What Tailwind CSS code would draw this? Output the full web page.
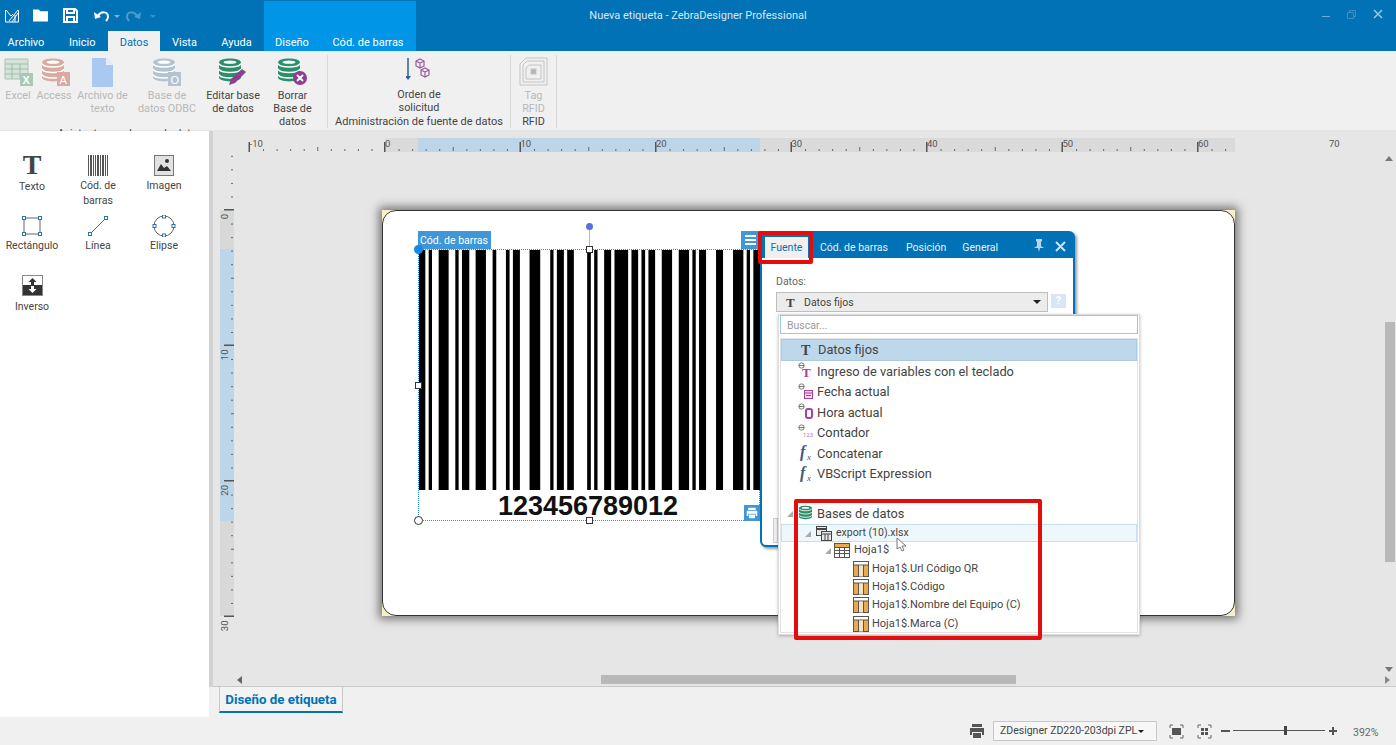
<!DOCTYPE html>
<html lang="es">
<head>
<meta charset="UTF-8" />
<title>Nueva etiqueta - ZebraDesigner Professional</title>
<script src="https://cdn.jsdelivr.net/npm/@tailwindcss/browser@4"></script>
</head>
<body class="w-[1396px] h-[745px] overflow-hidden bg-[#f0f0f0] font-['Roboto',sans-serif] text-[11px] text-[#444]">
<svg class="hidden">
  <symbol id="db" viewBox="0 0 24 26"><path fill="currentColor" d="M0 5C0-1 24-1 24 5v16c0 6-24 6-24 0z"/><path fill="none" stroke="#fff" stroke-width="1.6" d="M0 6c2 5 22 5 24 0M0 12c2 5 22 5 24 0M0 18c2 5 22 5 24 0"/><ellipse cx="12" cy="4.500" rx="7" ry="1.800" fill="#fff"/></symbol>
  <symbol id="fx" viewBox="0 0 16 16"><text x="1" y="12" font-family="Liberation Serif" font-style="italic" font-weight="bold" font-size="16" fill="#3e5a80">f</text><text x="8" y="15" font-family="Liberation Serif" font-style="italic" font-size="9" fill="#3e5a80">x</text></symbol>
  <symbol id="col" viewBox="0 0 16 16"><rect x="0.500" y="0.500" width="15" height="15" fill="#fff" stroke="#555"/><rect x="1" y="4" width="14" height="11" fill="#e9a94c"/><path d="M0 4h16M5.500 4v12M10.500 4v12" stroke="#555" fill="none"/><rect x="6" y="4.500" width="4" height="11" fill="#f7e3c0"/></symbol>
  <symbol id="var" viewBox="0 0 8 8"><circle cx="4" cy="4" r="3" fill="none" stroke="#666"/><path d="M1 4h6" stroke="#666"/></symbol>
  <symbol id="tri" viewBox="0 0 7 7"><path d="M7 0v7H0z" fill="#aaa"/></symbol>
  <symbol id="prn" viewBox="0 0 16 16"><path fill="currentColor" d="M3 1h10v3H3zM1 5h14v7h-2V9H3v3H1zM4 10h8v5H4z"/></symbol>
</svg>

<header class="relative h-[51px] bg-[#0072b5] text-white">
  <div class="absolute left-[264px] top-[1px] bottom-0 w-[152px] bg-[#0095e6]"></div>
  <div class="absolute inset-x-0 top-[8px] text-center text-[11px] text-[#d5e8f4]">Nueva etiqueta - ZebraDesigner Professional</div>
  <div class="absolute right-[13px] top-[9px] flex items-center gap-[17px]">
    <span class="w-[8px] h-px bg-[#6fb0d8] mt-[4px]"></span>
    <svg width="9" height="9" viewBox="0 0 9 9" fill="none" stroke="#3f8fc0"><path d="M.5 2.500h6v6h-6zM2.500 2.500v-2h6v6h-2"/></svg>
    <svg width="10" height="10" viewBox="0 0 10 10" stroke="#9cc6e0" stroke-width="1.500"><path d="M1 1l8 8M9 1 1 9"/></svg>
  </div>
  <div class="relative flex items-center h-[31px] pl-[5px]">
    <svg width="14" height="14" viewBox="0 0 14 14" fill="none" stroke="#fff"><path d="M.5 1v12h13V1M1 1l5 6 2-2M13 1 4 12M7 13l6-9M10 6v7"/></svg>
    <svg class="ml-[14px]" width="15" height="13" viewBox="0 0 16 13" fill="#fff"><path d="M0 0h6l2 2h8v11H0z"/></svg>
    <svg class="ml-[15px]" width="15" height="15" viewBox="0 0 15 15" fill="none" stroke="#fff" stroke-width="2"><path d="M1 1h11l2 2v11H1zM4 1v4h7V1M4 14V9h7v5"/></svg>
    <svg class="ml-[16px]" width="15" height="12" viewBox="0 0 15 12" fill="none" stroke="#fff" stroke-width="2"><path d="M4 6c3-5 10-5 10 1 0 2-1 3-2 4"/><path d="M0 2l1 7 6-2z" fill="#fff" stroke="none"/></svg>
    <span class="ml-[5px] mt-[1px] w-0 h-0 border-x-[3px] border-x-transparent border-t-[3px] border-t-[#7fb4d6]"></span>
    <svg class="ml-[6px]" width="15" height="12" viewBox="0 0 15 12" fill="none" stroke="#4f9bc9" stroke-width="2"><path d="M11 6C8 1 1 1 1 7c0 2 1 3 2 4"/><path d="M15 2l-1 7-6-2z" fill="#4f9bc9" stroke="none"/></svg>
    <span class="ml-[9px] mt-[1px] w-0 h-0 border-x-[3px] border-x-transparent border-t-[3px] border-t-[#3f8fc0]"></span>
  </div>
  <nav class="relative flex h-[20px] text-[11px] leading-[23px]">
    <span class="w-[52px] text-center">Archivo</span>
    <span class="w-[56px] pl-[17px]">Inicio</span>
    <span class="w-[52px] text-center bg-[#f0f0f0] text-[#0072b5]">Datos</span>
    <span class="w-[49px] text-center">Vista</span>
    <span class="w-[55px] text-center">Ayuda</span>
    <span class="w-[56px] text-center">Diseño</span>
    <span class="w-[96px] text-center">Cód. de barras</span>
  </nav>
</header>

<section class="flex h-[80px] border-b border-[#e4e4e4] text-[10.800px] leading-[13px]">
  <div class="w-[328px] flex flex-col border-r border-[#d8d8d8] mt-[4px] mb-[2px]">
    <div class="flex flex-1 text-center pt-[3px]">
      <div class="w-[36px] text-[#b8b8b8]">
        <svg class="mb-[3px] ml-[4px]" width="29" height="28" viewBox="0 0 29 28"><path d="M1 1h23v20H1z" fill="#d6e3da" stroke="#a7c5b1"/><path d="M1 6h23M1 11h23M1 16h23M8 6v15M16 6v15" stroke="#9dbfa9"/><rect x="16" y="15" width="13" height="13" fill="#a9c9b4"/><text x="18.500" y="26" font-family="Liberation Sans" font-weight="bold" font-size="11" fill="#fff">X</text></svg>
        <div>Excel</div>
      </div>
      <div class="w-[36px] text-[#b8b8b8]">
        <svg class="ml-[6px] mb-[3px]" width="28" height="28" viewBox="0 0 28 28"><svg width="22" height="24" color="#d9a9a2"><use href="#db"/></svg><rect x="15" y="14" width="13" height="14" fill="#d9a9a2"/><text x="17.500" y="26" font-family="Liberation Sans" font-size="11" fill="#fff">A</text></svg>
        <div>Access</div>
      </div>
      <div class="w-[61px] text-[#b8b8b8]">
        <svg class="mx-auto mb-[3px]" width="21" height="29" viewBox="0 0 21 29"><path d="M0 0h14l7 7v22H0z" fill="#a9c9f0"/><path d="M14 0l7 7h-7z" fill="#e4eefa"/></svg>
        <div class="-mt-px">Archivo de texto</div>
      </div>
      <div class="w-[68px] text-[#b8b8b8]">
        <svg class="mx-auto mb-[3px]" width="28" height="28" viewBox="0 0 28 28"><svg width="22" height="24" color="#b3c4d0"><use href="#db"/></svg><rect x="15" y="14" width="13" height="14" fill="#b3c4d0"/><text x="17.500" y="26" font-family="Liberation Sans" font-size="11" fill="#fff">O</text></svg>
        <div>Base de datos ODBC</div>
      </div>
      <div class="w-[64px]">
        <svg class="mx-auto mb-[3px]" width="28" height="28" viewBox="0 0 28 28"><svg width="22" height="24" color="#2b8f6a"><use href="#db"/></svg><path d="M10 27l2-6L23 11l4 3-11 11z" fill="#8a3f90"/></svg>
        <div>Editar base de datos</div>
      </div>
      <div class="w-[55px]">
        <svg class="mx-auto mb-[3px]" width="29" height="28" viewBox="0 0 29 28"><svg width="22" height="24" color="#2b8f6a"><use href="#db"/></svg><circle cx="22" cy="20" r="7" fill="#8a3f90"/><path d="M19 17l6 6m0-6l-6 6" stroke="#fff" stroke-width="1.800"/></svg>
        <div>Borrar Base de datos</div>
      </div>
    </div>
    <div class="text-center pr-[6px] h-[12px] leading-[12px]">Asistente para bases de datos paso a paso</div>
  </div>
  <div class="w-[183px] flex flex-col border-r border-[#d8d8d8] mt-[4px] mb-[2px] text-center">
    <div class="flex-1 pt-[3px]">
      <svg class="mx-auto mb-[6px]" width="26" height="24" viewBox="0 0 26 24" fill="none"><path d="M2 0v19" stroke="#2f5f95" stroke-width="1.500"/><path d="M-1 18h6l-3 4z" fill="#2f5f95"/><path d="M10 3l4-2 4 2v5l-4 2-4-2zM10 3l4 2 4-2M14 5v5M15 12l4-2 4 2v5l-4 2-4-2zM15 12l4 2 4-2M19 14v5" stroke="#9a5aa0" stroke-width="1.200"/></svg>
      <div>Orden de<br />solicitud</div>
    </div>
    <div class="h-[12px] leading-[12px] text-[11px]">Administración de fuente de datos</div>
  </div>
  <div class="w-[46px] flex flex-col border-r border-[#d8d8d8] mt-[4px] mb-[2px] text-center">
    <div class="flex-1 text-[#b8b8b8] pt-[2px]">
      <svg class="mx-auto mb-[3px]" width="29" height="29" viewBox="0 0 29 29" fill="none" stroke="#c4c4c4"><path d="M7 1h21v27H1V7zM8 4h17v21H4V8zM10 8h12v14H7V11z"/><rect x="12" y="12" width="5" height="5" fill="#b5b5b5"/></svg>
      <div>Tag<br />RFID</div>
    </div>
    <div class="h-[12px] leading-[12px]">RFID</div>
  </div>
</section>

<main class="flex h-[586px]">
  <aside class="w-[209px] bg-white pt-[24px] text-[10.500px] leading-[15px] text-center">
    <div class="grid grid-cols-[66px_66px_66px] -ml-px auto-rows-[60px]">
      <div>
        <div class="h-[26px] -mt-[3px] font-['Liberation_Serif'] font-bold text-[28px] leading-[26px]">T</div>
        <div class="mt-[1px]">Texto</div>
      </div>
      <div>
        <svg class="mx-auto" width="20" height="21" viewBox="0 0 20 21" fill="#555"><path d="M0 0h1v21H0zM2 0h2v21H2zM5 0h1v21H5zM7 0h1v21H7zM9 0h2v21H9zM12 0h1v21h-1zM14 0h2v21h-2zM17 0h1v21h-1zM19 0h1v21h-1z"/></svg>
        <div class="mt-[2px]">Cód. de<br />barras</div>
      </div>
      <div>
        <svg class="mx-auto" width="20" height="21" viewBox="0 0 20 21"><rect x=".500" y=".500" width="19" height="20" fill="#e2e2e2" stroke="#777"/><path d="M3 16l4-7 3 4 3-2 4 5z" fill="#333"/><circle cx="13" cy="6" r="2" fill="#333"/></svg>
        <div class="mt-[2px]">Imagen</div>
      </div>
      <div>
        <svg class="mx-auto" width="22" height="22" viewBox="0 0 22 22" fill="#fff" stroke="#3470a8"><rect x="3" y="3" width="16" height="16" fill="none" stroke="#666"/><rect x="1.500" y="1.500" width="3" height="3"/><rect x="17.500" y="1.500" width="3" height="3"/><rect x="1.500" y="17.500" width="3" height="3"/><rect x="17.500" y="17.500" width="3" height="3"/></svg>
        <div class="mt-[1px] -mx-[8px]">Rectángulo</div>
      </div>
      <div>
        <svg class="mx-auto" width="22" height="22" viewBox="0 0 22 22" fill="#fff" stroke="#3470a8"><path d="M3 19 19 3" stroke="#666"/><rect x="1.500" y="17.500" width="3" height="3"/><rect x="17.500" y="1.500" width="3" height="3"/></svg>
        <div class="mt-[1px]">Línea</div>
      </div>
      <div>
        <svg class="mx-auto" width="24" height="22" viewBox="0 0 24 22" fill="#fff" stroke="#3470a8"><circle cx="12" cy="11" r="10" fill="none" stroke="#666"/><rect x="10.500" y="0" width="3" height="3"/><rect x="10.500" y="19" width="3" height="3"/><rect x="1" y="9.500" width="3" height="3"/><rect x="20" y="9.500" width="3" height="3"/></svg>
        <div class="mt-[1px]">Elipse</div>
      </div>
      <div>
        <svg class="mx-auto" width="21" height="21" viewBox="0 0 21 21"><rect x=".500" y=".500" width="20" height="20" fill="#fff" stroke="#888"/><rect x="1" y="10" width="19" height="10" fill="#333"/><path d="M10.500 3l4 4h-2.500v3H9V7H6.500z" fill="#333"/><path d="M10.500 18l4-4H12v-3H9v3H6.500z" fill="#fff"/></svg>
        <div class="mt-[3px]">Inverso</div>
      </div>
    </div>
  </aside>

  <div class="flex-1 flex flex-col">
    <div class="flex flex-1 min-h-0">
      <div class="w-[4px] bg-[#d2d2d2]"></div>
      <div id="canvas" class="relative w-[1183px] h-[556px] bg-[#e6e6e6] border-b border-[#c8c8c8] overflow-hidden">
        <svg id="rulers" class="absolute left-0 top-0" width="1183" height="556" viewBox="213 131 1183 556"></svg>

        <!-- label -->
        <div class="absolute left-[169px] top-[79px] w-[853px] h-[406px] bg-[#f7f0c6] shadow-[0_0_9px_3px_rgba(0,0,0,0.5)]">
          <div class="w-full h-full bg-white rounded-[14px] border border-[#333]"></div>
        </div>

        <!-- barcode -->
        <div class="absolute left-[205px] top-[118px] w-[342px] h-[272px] border border-dotted border-[#2f8fd8]">
          <svg id="bars" class="block" width="341" height="240" viewBox="0 0 1024 718" preserveAspectRatio="none"></svg>
          <div class="text-center pr-[2px] font-['Liberation_Sans'] font-bold text-[27px] leading-[32px] text-[#111]">123456789012</div>
          <div class="absolute -left-px -top-[19px] w-[73px] h-[18px] bg-[#3f96d8] text-white text-[10.500px] leading-[19px] pl-[2px]">Cód. de barras</div>
          <div class="absolute left-[322px] -top-[19px] w-[19px] h-[18px] bg-[#3f96d8] flex flex-col justify-center gap-[2px] px-[4px]"><i class="block h-[2px] bg-white"></i><i class="block h-[2px] bg-white"></i><i class="block h-[2px] bg-white"></i></div>
          <div class="absolute left-[325px] top-[255px] w-[16px] h-[16px] bg-[#3f96d8] text-white p-[2px]"><svg width="12" height="12"><use href="#prn"/></svg></div>
          <div class="absolute left-[170px] -top-[21px] w-px h-[20px] bg-[#a9b4e8]"></div>
          <div class="absolute left-[167px] -top-[27px] w-[7px] h-[7px] rounded-full bg-[#5a6ee0]"></div>
          <div class="absolute -left-[5px] -top-[5px] w-[9px] h-[9px] rounded-full bg-[#1c86e8]"></div>
          <div class="absolute left-[167px] -top-[4px] w-[7px] h-[7px] bg-white border border-[#333]"></div>
          <div class="absolute -left-[4px] top-[132px] w-[7px] h-[7px] bg-white border border-[#333]"></div>
          <div class="absolute left-[167px] top-[267px] w-[7px] h-[7px] bg-white border border-[#333]"></div>
          <div class="absolute -left-[5px] top-[266px] w-[9px] h-[9px] rounded-full bg-white border border-[#333]"></div>
        </div>

        <!-- properties panel -->
        <div class="absolute left-[547px] top-[100px] w-[315px] h-[316px] bg-white border-2 border-[#0072b5] rounded-[6px] shadow-[2px_2px_3px_rgba(0,0,0,0.4)]">
          <div class="flex items-end h-[25px] bg-[#0072b5] text-[#e3f1fa] text-[10.500px] pl-[3px]">
            <span class="w-[43px] h-[21px] bg-[#f0f0f0] text-[#0072b5] text-center leading-[22px]">Fuente</span>
            <span class="ml-[12px] w-[70px] leading-[21px]">Cód. de barras</span>
            <span class="ml-[16px] leading-[21px]">Posición</span>
            <span class="ml-[16px] leading-[21px]">General</span>
            <svg class="ml-[36px] mb-[6px]" width="10" height="13" viewBox="0 0 10 13" fill="#b8d4e8"><path d="M2 0h6v2L7 3v4l3 2H6l-1 4-1-4H0l3-2V3L2 2z"/></svg>
            <svg class="ml-[11px] mb-[6px]" width="11" height="11" viewBox="0 0 11 11" stroke="#cfe2f0" stroke-width="2"><path d="M1 1l9 9M10 1l-9 9"/></svg>
          </div>
          <div class="pl-[14px] pt-[17px] text-[10.500px] text-[#666] leading-[13px]">Datos:</div>
          <div class="ml-[14px] mt-[4px] w-[272px] h-[20px] flex items-center pt-[2px] bg-[#ececec] border border-[#bdbdbd] text-[#444] text-[10.500px] relative pl-[9px]">
            <span class="w-[18px] font-['Liberation_Serif'] font-bold text-[13px] leading-[16px]">T</span>
            <span>Datos fijos</span>
            <span class="absolute right-[6px] top-[7px] w-0 h-0 border-x-[4px] border-x-transparent border-t-[4px] border-t-[#222]"></span>
            <div class="absolute left-[274px] top-[1px] w-[15px] h-[14px] bg-[#dbe6f5] text-white text-[10px] leading-[14px] text-center font-bold">?</div>
          </div>
          <div class="absolute left-[11px] bottom-[2px] w-[5px] h-[25px] bg-[#f0f0f0] border border-[#ccc]"></div>
        </div>

        <!-- data source dropdown -->
        <div class="absolute left-[565px] top-[183px] w-[362px] h-[321px] bg-white border border-[#dcdcdc] shadow-[0_1px_3px_rgba(0,0,0,0.25)]">
          <div class="mx-px h-[19px] border border-[#9cc7e2] text-[10.500px] leading-[19px] pl-[6px] text-[#999]">Buscar...</div>
          <div class="ml-px mr-px mt-[4px] h-[295px] border border-[#e3e3e3] text-[12.800px] text-[#444]">
            <div class="flex items-center h-[22px] pl-[36px] bg-[#bcd8ea] border border-[#a9cbe0] relative">
              <span class="absolute left-[19px] font-['Liberation_Serif'] font-bold text-[14px]">T</span>Datos fijos
            </div>
            <div class="flex items-center h-[20.500px] pl-[36px] relative">
              <svg class="absolute left-[17px] top-[1px]" width="7" height="7"><use href="#var"/></svg>
              <span class="absolute left-[21px] top-[2px] font-['Liberation_Serif'] font-bold text-[13px] text-[#a8419a]">T</span>Ingreso de variables con el teclado
            </div>
            <div class="flex items-center h-[20.500px] pl-[36px] relative">
              <svg class="absolute left-[17px] top-[1px]" width="7" height="7"><use href="#var"/></svg>
              <svg class="absolute left-[23px] top-[7px]" width="9" height="10" viewBox="0 0 9 10"><rect x=".500" y="1.500" width="8" height="8" fill="#f4d7ef" stroke="#a8419a"/><path d="M1 4h7M2 6.500h5" stroke="#a8419a"/></svg>Fecha actual
            </div>
            <div class="flex items-center h-[20.500px] pl-[36px] relative">
              <svg class="absolute left-[17px] top-[1px]" width="7" height="7"><use href="#var"/></svg>
              <svg class="absolute left-[24px] top-[6px]" width="8" height="11" viewBox="0 0 8 11"><rect x="1" y="1" width="6" height="9" rx="2" fill="#fff" stroke="#a8419a" stroke-width="2"/></svg>Hora actual
            </div>
            <div class="flex items-center h-[20.500px] pl-[36px] relative">
              <svg class="absolute left-[17px] top-[1px]" width="7" height="7"><use href="#var"/></svg>
              <span class="absolute left-[22px] top-[8px] text-[6px] leading-[8px] text-[#c678b8]">123</span>Contador
            </div>
            <div class="flex items-center h-[20.500px] pl-[36px] relative">
              <svg class="absolute left-[18px] top-[2px]" width="16" height="16"><use href="#fx"/></svg>Concatenar
            </div>
            <div class="flex items-center h-[20.500px] pl-[36px] relative">
              <svg class="absolute left-[18px] top-[2px]" width="16" height="16"><use href="#fx"/></svg>VBScript Expression
            </div>
            <div class="h-[19.500px]"></div>
            <div class="flex items-center h-[20px] relative pl-[36px]">
              <svg class="absolute left-[6px] top-[7px]" width="6" height="6"><use href="#tri"/></svg>
              <svg class="absolute left-[18px] top-[1px]" color="#2b8f6a" width="13" height="15"><use href="#db"/></svg>Bases de datos
            </div>
            <div class="flex items-center h-[18px] relative pl-[54px] text-[10.500px] bg-[#eef7fc] border border-[#c4dfee]">
              <svg class="absolute left-[23px] top-[6px]" width="6" height="6"><use href="#tri"/></svg>
              <svg class="absolute left-[34px] top-[1px]" width="16" height="15" viewBox="0 0 16 15" fill="#e9e9e9" stroke="#444"><rect x=".500" y=".500" width="10" height="9"/><path d="M1 3h9" stroke-width="2"/><rect x="5.500" y="5.500" width="10" height="9"/><path d="M6 8h9M9 8v6M12 8v6" /></svg>export (10).xlsx
            </div>
            <div class="flex items-center h-[18.300px] relative pl-[73px] text-[11px]">
              <svg class="absolute left-[44px] top-[6px]" width="6" height="6"><use href="#tri"/></svg>
              <svg class="absolute left-[53px] top-[1px]" width="16" height="15" viewBox="0 0 16 15" fill="#fff" stroke="#555"><rect x=".500" y=".500" width="15" height="14"/><rect x="1" y="1" width="14" height="3" fill="#e9a94c" stroke="none"/><path d="M1 4.500h14M1 7.500h14M1 10.500h14M5.500 4v10M10.500 4v10"/></svg>Hoja1$
            </div>
            <div class="flex items-center h-[18.300px] relative pl-[91px] text-[11px]"><svg class="absolute left-[72px] top-[1px]" width="16" height="16"><use href="#col"/></svg>Hoja1$.Url Código QR</div>
            <div class="flex items-center h-[18.300px] relative pl-[91px] text-[11px]"><svg class="absolute left-[72px] top-[1px]" width="16" height="16"><use href="#col"/></svg>Hoja1$.Código</div>
            <div class="flex items-center h-[18.300px] relative pl-[91px] text-[11px]"><svg class="absolute left-[72px] top-[1px]" width="16" height="16"><use href="#col"/></svg>Hoja1$.Nombre del Equipo (C)</div>
            <div class="flex items-center h-[18.300px] relative pl-[91px] text-[11px]"><svg class="absolute left-[72px] top-[1px]" width="16" height="16"><use href="#col"/></svg>Hoja1$.Marca (C)</div>
          </div>
        </div>

        <!-- annotations -->
        <div class="absolute left-[545px] top-[100px] w-[55px] h-[33px] border-[4px] border-[#e30d0d] rounded-[2px]"></div>
        <div class="absolute left-[581px] top-[368px] w-[248px] h-[141px] border-[4px] border-[#e30d0d] rounded-[2px]"></div>
        <svg class="absolute left-[683px] top-[406px]" width="11" height="15" viewBox="0 0 11 15"><path d="M1 1v11l3-2 2 4 2-1-2-4h4z" fill="#fff" stroke="#777"/></svg>

        <!-- scrollbars -->
        <div class="absolute left-[1172px] top-[191px] w-[10px] h-[240px] bg-[#b8b8b8]"></div>
        <div class="absolute left-[388px] top-[544px] w-[415px] h-[9px] bg-[#b8b8b8]"></div>
        <span class="absolute left-[1172px] top-[25px] w-0 h-0 border-x-[4px] border-x-transparent border-b-[5px] border-b-[#777]"></span>
        <span class="absolute left-[1172px] top-[536px] w-0 h-0 border-x-[4px] border-x-transparent border-t-[5px] border-t-[#777]"></span>
        <span class="absolute left-[24px] top-[545px] w-0 h-0 border-y-[4px] border-y-transparent border-r-[5px] border-r-[#666]"></span>
        <span class="absolute left-[1172px] top-[545px] w-0 h-0 border-y-[4px] border-y-transparent border-l-[5px] border-l-[#888]"></span>
      </div>
    </div>
    <div class="h-[30px] pl-[10px] flex">
      <div class="w-[124px] h-[26px] bg-[#f3f3f3] border-x border-[#c8c8c8] border-b-2 border-b-[#0072b5] text-[#0072b5] font-bold text-[13.300px] leading-[26px] text-center">Diseño de etiqueta</div>
    </div>
  </div>
</main>

<footer class="relative h-[28px] flex items-center pl-[969px] text-[10.500px]">
  <svg class="text-[#555]" width="16" height="16"><use href="#prn"/></svg>
  <div class="ml-[8px] w-[164px] h-[20px] flex items-center bg-[#f7f7f7] border border-[#c8c8c8] pl-[6px] gap-[1px]">ZDesigner ZD220-203dpi ZPL<span class="w-0 h-0 border-x-[3px] border-x-transparent border-t-[3px] border-t-[#222]"></span></div>
  <svg class="ml-[12px]" width="15" height="15" viewBox="0 0 15 15" fill="none" stroke="#666"><path d="M1 4V1h3M11 1h3v3M14 11v3h-3M4 14H1v-3"/><rect x="3" y="4" width="9" height="7" fill="#555" stroke="none"/></svg>
  <svg class="ml-[13px]" width="15" height="15" viewBox="0 0 15 15" fill="none" stroke="#666"><path d="M1 4V1h3M11 1h3v3M14 11v3h-3M4 14H1v-3"/><path d="M4 4h3v3H4zM8 4h3v3H8zM4 8h3v3H4zM8 8h3v3H8z" fill="#555" stroke="none"/></svg>
  <div class="ml-[9px] relative w-[116px] h-[12px]">
    <div class="absolute left-0 top-[5px] w-[9px] h-[2px] bg-[#555]"></div>
    <div class="absolute left-[12px] right-[12px] top-[5px] h-px bg-[#555]"></div>
    <div class="absolute left-[63px] top-[1px] w-[3px] h-[9px] bg-[#444]"></div>
    <div class="absolute right-0 top-[5px] w-[8px] h-[2px] bg-[#555]"></div>
    <div class="absolute right-[3px] top-[2px] w-[2px] h-[8px] bg-[#555]"></div>
  </div>
  <span class="absolute left-[1353px] top-[9px] leading-[13px] text-[#666]">392%</span>
</footer>

<script>
  // barcode bars, measured off the reference
  const bars = [[0,19],[29,39],[59,89],[109,119],[129,151],[170,201],[221,232],[261,272],[282,303],[332,364],[394,404],[414,435],[445,465],[505,516],[526,536],[556,577],[587,628],[638,658],[668,679],[689,709],[729,760],[780,811],[821,831],[841,862],[892,913],[943,974],[984,994],[1004,1024]]
  document.getElementById('bars').innerHTML = bars
    .map(b => `<rect x="${b[0]}" y="0" width="${b[1] - b[0]}" height="718" fill="#000"/>`)
    .join('')

  // rulers
  const step = 135.5 / 10
  let r = ''
  r += '<rect x="385" y="138" width="33" height="14" fill="#dadada"/>'
  r += '<rect x="418" y="138" width="342" height="14" fill="#bdd5e8"/>'
  r += '<rect x="760" y="138" width="475" height="14" fill="#dadada"/>'
  r += '<rect x="220" y="210" width="14" height="39" fill="#d8d8d8"/>'
  r += '<rect x="220" y="249" width="14" height="272" fill="#bdd5e8"/>'
  r += '<rect x="220" y="521" width="14" height="95" fill="#d8d8d8"/>'
  for (let i = -10; i <= 62; i += 1) {
    const x = 385 + i * step
    const major = i % 10 === 0
    const mid = i % 5 === 0
    if (major) {
      r += `<rect x="${x - 1}" y="142" width="1.500" height="10" fill="#555"/>`
      r += `<text x="${x}" y="147" font-family="Roboto" font-size="9.500" fill="#555">${i}</text>`
    } else {
      r += `<rect x="${x}" y="${mid ? 147 : 149}" width="1" height="${mid ? 4 : 2}" fill="#666"/>`
    }
  }
  for (let i = -4; i <= 30; i += 1) {
    const y = 210 + i * step
    const major = i % 10 === 0
    if (major && i >= 0) {
      r += `<rect x="224" y="${y - 1}" width="10" height="1.500" fill="#555"/>`
      r += `<text transform="translate(228 ${y + 4}) rotate(-90)" text-anchor="end" font-family="Roboto" font-size="9.500" fill="#555">${i}</text>`
    } else {
      r += `<rect x="231" y="${y}" width="${i % 5 === 0 ? 3 : 2}" height="1" fill="#666"/>`
    }
  }
  r += '<text x="1329" y="147" font-family="Roboto" font-size="9.500" fill="#555">70</text>'
  document.getElementById('rulers').innerHTML = r
</script>
</body>
</html>
